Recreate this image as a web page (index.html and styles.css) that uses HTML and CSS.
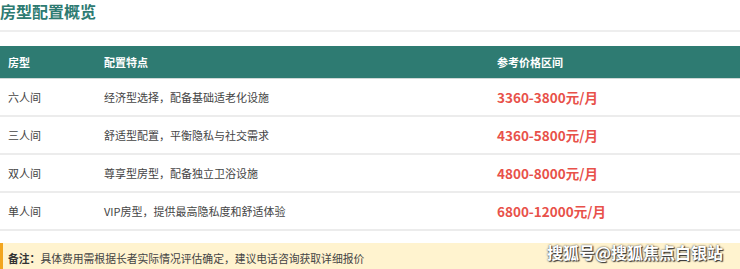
FILE: index.html
```html
<!DOCTYPE html>
<html lang="zh">
<head>
<meta charset="utf-8">
<link rel="stylesheet" href="styles.css">
</head>
<body>
<div class="page">
  <h2 class="title">房型配置概览</h2>
  <table class="rooms">
    <thead>
      <tr><th class="c1">房型</th><th class="c2">配置特点</th><th class="c3">参考价格区间</th></tr>
    </thead>
    <tbody>
      <tr><td>六人间</td><td>经济型选择，配备基础适老化设施</td><td class="price">3360-3800元/月</td></tr>
      <tr><td>三人间</td><td>舒适型配置，平衡隐私与社交需求</td><td class="price">4360-5800元/月</td></tr>
      <tr><td>双人间</td><td>尊享型房型，配备独立卫浴设施</td><td class="price">4800-8000元/月</td></tr>
      <tr><td>单人间</td><td>VIP房型，提供最高隐私度和舒适体验</td><td class="price">6800-12000元/月</td></tr>
    </tbody>
  </table>
  <div class="note"><b>备注：</b>具体费用需根据长者实际情况评估确定，建议电话咨询获取详细报价</div>
  <div class="watermark">搜狐号@搜狐焦点白银站</div>
</div>
</body>
</html>
```
FILE: styles.css
```css
html, body {
  margin: 0;
  padding: 0;
  background: #fff;
}
body {
  font-family: "Noto Sans CJK SC", "Noto Sans", sans-serif;
  color: #444;
  font-size: 11px;
}
.page {
  position: relative;
  width: 740px;
  height: 269px;
  overflow: hidden;
}
.title {
  margin: 0;
  padding: 0 0 8px 0;
  font-size: 16px;
  line-height: 22px;
  font-weight: bold;
  color: #2e7b72;
  border-bottom: 2px solid #eee;
}
.rooms {
  margin-top: 14px;
  width: 740px;
  border-collapse: collapse;
  table-layout: fixed;
}
.rooms th {
  background: #2e7b72;
  color: #fff;
  font-weight: bold;
  text-align: left;
  height: 32px;
  padding: 0 8px;
  border-bottom: 1px solid #cfd8d6;
}
.c1 { width: 80px; }
.c2 { width: 377px; }
.rooms td {
  height: 36px;
  padding: 0 8px;
  border-bottom: 2px solid #ececec;
}
.rooms td.price {
  color: #e8514a;
  font-weight: bold;
  font-size: 13.5px;
}
.note {
  margin-top: 12px;
  background: #fff3cf;
  border-left: 3px solid #f2a51f;
  padding: 0 5px;
  height: 30px;
  line-height: 30px;
  font-size: 10.8px;
  color: #444;
}
.note b {
  color: #333;
}
.watermark {
  position: absolute;
  right: 17px;
  bottom: 5px;
  font-size: 16px;
  font-weight: bold;
  color: #fff;
  text-shadow: 0 0 2px #333, 1px 1px 1px #333;
}
```
